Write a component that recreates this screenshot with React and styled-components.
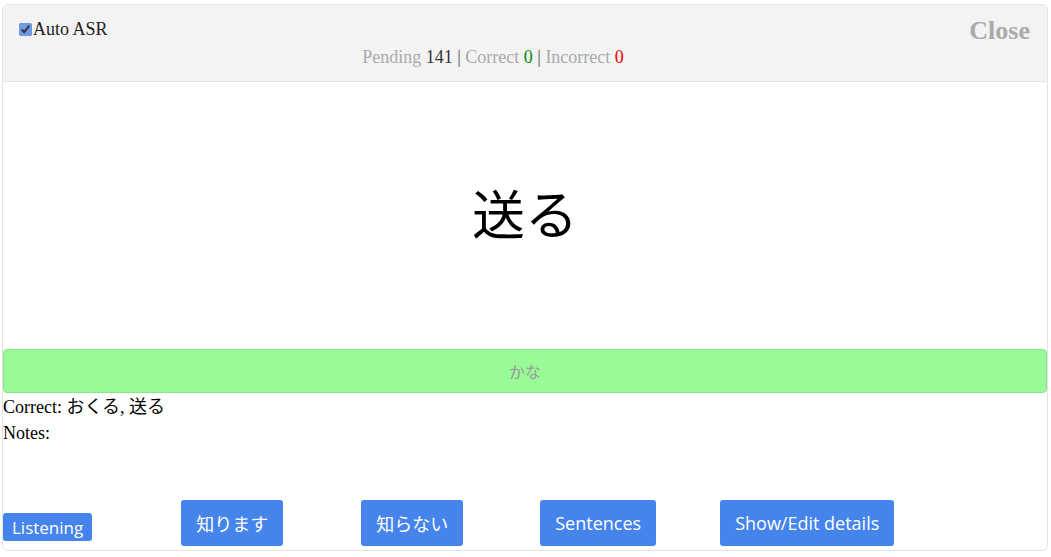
import React from "react";
import styled, { createGlobalStyle } from "styled-components";

const Global = createGlobalStyle`
  html, body { margin: 0; padding: 0; background: #fff; }
  body { font-family: "Liberation Serif", "Noto Sans CJK JP", serif; color: #000; }
`;

const Card = styled.div`
  box-sizing: border-box;
  margin: 4px 0 0 2px;
  width: 1046px;
  height: 547px;
  border: 1px solid #e3e3e3;
  border-radius: 6px;
  display: flex;
  flex-direction: column;
  overflow: hidden;
`;

const Header = styled.div`
  position: relative;
  height: 77px;
  box-sizing: border-box;
  background: #f3f3f3;
  border-bottom: 1px solid #e6e6e6;
  padding: 14px 0 0 16px;
`;

const AsrLabel = styled.label`
  display: flex;
  align-items: center;
  font-size: 18px;
  color: #222;
  height: 20px;
`;

const Check = styled.input`
  margin: 0 1px 0 0;
  width: 13px;
  height: 13px;
  accent-color: #6e9be8;
`;

const Stats = styled.div`
  margin-top: 8px;
  padding-right: 80px;
  text-align: center;
  font-size: 18px;
  color: #aaa;
`;

const Num = styled.span`
  color: ${(p) => p.$color};
`;

const Sep = styled.span`
  color: #555;
`;

const Close = styled.div`
  position: absolute;
  top: 11px;
  right: 17px;
  font-size: 26px;
  font-weight: bold;
  color: #aaa;
  cursor: pointer;
`;

const Stage = styled.div`
  height: 267px;
  display: flex;
  align-items: center;
  justify-content: center;
  padding-bottom: 8px;
  box-sizing: border-box;
`;

const Word = styled.div`
  font-family: "Noto Sans CJK JP", serif;
  font-size: 53px;
  font-weight: 400;
  color: #000;
`;

const KanaInput = styled.input`
  box-sizing: border-box;
  margin: 0;
  width: 100%;
  height: 44px;
  background: #98fb98;
  border: 1px solid #8ee48e;
  border-radius: 4px;
  text-align: center;
  font-family: "Noto Sans CJK JP", sans-serif;
  font-size: 16px;
  outline: none;
  &::placeholder { color: #9a9a9a; }
`;

const Info = styled.div`
  font-size: 18px;
  line-height: 26px;
  padding-top: 1px;
  & > div { height: 26px; }
`;

const Spacer = styled.div`
  flex: 1;
`;

const Buttons = styled.div`
  display: flex;
  align-items: flex-end;
  padding: 0 0 4px 0;
`;

const Btn = styled.button`
  margin: 0 0 ${(p) => (p.$small ? 5 : 0)}px ${(p) => p.$gap}px;
  border: none;
  border-radius: 3px;
  background: #4584ea;
  color: #fff;
  font-family: "Open Sans", "Noto Sans CJK JP", sans-serif;
  font-size: ${(p) => (p.$small ? 17 : 18)}px;
  font-weight: 400;
  height: ${(p) => (p.$small ? 28 : 46)}px;
  padding: 0 ${(p) => (p.$small ? 9 : 15)}px;
  cursor: pointer;
  white-space: nowrap;
`;

export default function App() {
  return (
    <>
      <Global />
      <Card>
        <Header>
          <AsrLabel>
            <Check type="checkbox" defaultChecked />
            Auto ASR
          </AsrLabel>
          <Stats>
            Pending <Num $color="#333">141</Num> <Sep>|</Sep> Correct{" "}
            <Num $color="#078a07">0</Num> <Sep>|</Sep> Incorrect{" "}
            <Num $color="#e00">0</Num>
          </Stats>
          <Close>Close</Close>
        </Header>
        <Stage>
          <Word>送る</Word>
        </Stage>
        <KanaInput placeholder="かな" />
        <Info>
          <div>Correct: おくる, 送る</div>
          <div>Notes:</div>
        </Info>
        <Spacer />
        <Buttons>
          <Btn $small $gap={0}>Listening</Btn>
          <Btn $gap={89}>知ります</Btn>
          <Btn $gap={78}>知らない</Btn>
          <Btn $gap={77}>Sentences</Btn>
          <Btn $gap={64}>Show/Edit details</Btn>
        </Buttons>
      </Card>
    </>
  );
}
